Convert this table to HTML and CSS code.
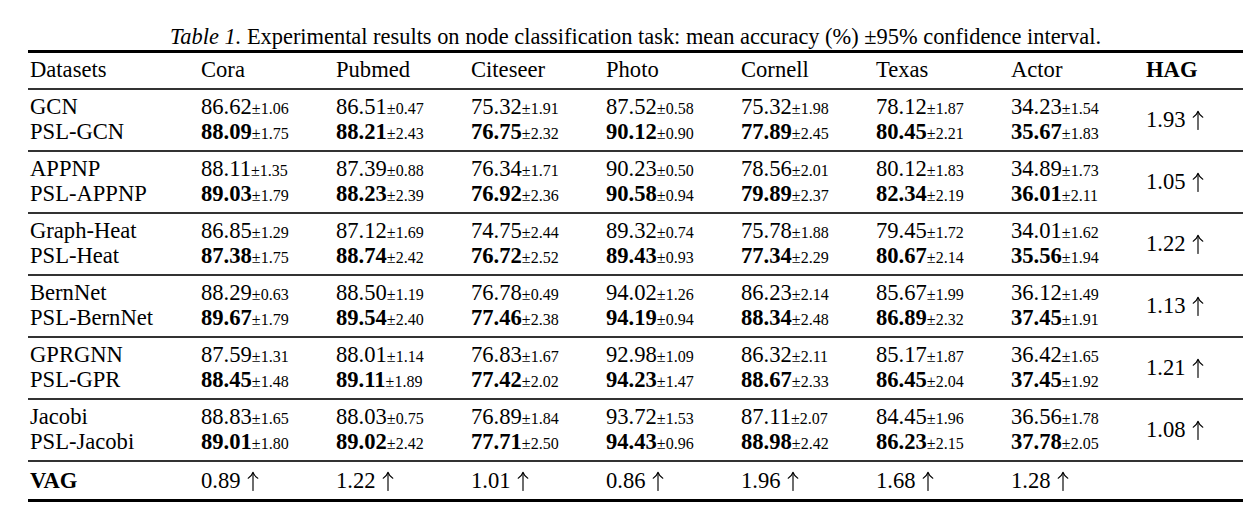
FILE: index.html
```html
<!DOCTYPE html>
<html lang="en">
<head>
<meta charset="utf-8">
<title>Table 1</title>
<link rel="stylesheet" href="styles.css">
</head>
<body>
<svg class="defs" width="0" height="0" aria-hidden="true">
  <defs>
    <symbol id="up" viewBox="0 0 12 20">
      <path d="M6 19.5 V2" fill="none" stroke="#000" stroke-width="1.15" stroke-linecap="round"/>
      <path d="M1.2 7.2 Q4.6 5.2 6 1.2 Q7.4 5.2 10.8 7.2" fill="none" stroke="#000" stroke-width="1.1" stroke-linecap="round" stroke-linejoin="round"/>
    </symbol>
  </defs>
</svg>
<div class="page">
  <p class="caption"><i>Table 1.</i> Experimental results on node classification task: mean accuracy (%) ±95% confidence interval.</p>
  <table class="results">
    <colgroup>
      <col class="c-name"><col class="c-val"><col class="c-val"><col class="c-val"><col class="c-val"><col class="c-val"><col class="c-val"><col class="c-val"><col class="c-gain">
    </colgroup>
    <thead>
      <tr><th>Datasets</th><th>Cora</th><th>Pubmed</th><th>Citeseer</th><th>Photo</th><th>Cornell</th><th>Texas</th><th>Actor</th><th class="bold">HAG</th></tr>
    </thead>
    <tbody>
      <tr class="first"><td>GCN</td><td>86.62<small>±1.06</small></td><td>86.51<small>±0.47</small></td><td>75.32<small>±1.91</small></td><td>87.52<small>±0.58</small></td><td>75.32<small>±1.98</small></td><td>78.12<small>±1.87</small></td><td>34.23<small>±1.54</small></td><td class="gain" rowspan="2">1.93<svg class="arrow"><use href="#up"/></svg></td></tr>
      <tr class="second"><td>PSL-GCN</td><td><b>88.09</b><small>±1.75</small></td><td><b>88.21</b><small>±2.43</small></td><td><b>76.75</b><small>±2.32</small></td><td><b>90.12</b><small>±0.90</small></td><td><b>77.89</b><small>±2.45</small></td><td><b>80.45</b><small>±2.21</small></td><td><b>35.67</b><small>±1.83</small></td></tr>

      <tr class="first"><td>APPNP</td><td>88.11<small>±1.35</small></td><td>87.39<small>±0.88</small></td><td>76.34<small>±1.71</small></td><td>90.23<small>±0.50</small></td><td>78.56<small>±2.01</small></td><td>80.12<small>±1.83</small></td><td>34.89<small>±1.73</small></td><td class="gain" rowspan="2">1.05<svg class="arrow"><use href="#up"/></svg></td></tr>
      <tr class="second"><td>PSL-APPNP</td><td><b>89.03</b><small>±1.79</small></td><td><b>88.23</b><small>±2.39</small></td><td><b>76.92</b><small>±2.36</small></td><td><b>90.58</b><small>±0.94</small></td><td><b>79.89</b><small>±2.37</small></td><td><b>82.34</b><small>±2.19</small></td><td><b>36.01</b><small>±2.11</small></td></tr>

      <tr class="first"><td>Graph-Heat</td><td>86.85<small>±1.29</small></td><td>87.12<small>±1.69</small></td><td>74.75<small>±2.44</small></td><td>89.32<small>±0.74</small></td><td>75.78<small>±1.88</small></td><td>79.45<small>±1.72</small></td><td>34.01<small>±1.62</small></td><td class="gain" rowspan="2">1.22<svg class="arrow"><use href="#up"/></svg></td></tr>
      <tr class="second"><td>PSL-Heat</td><td><b>87.38</b><small>±1.75</small></td><td><b>88.74</b><small>±2.42</small></td><td><b>76.72</b><small>±2.52</small></td><td><b>89.43</b><small>±0.93</small></td><td><b>77.34</b><small>±2.29</small></td><td><b>80.67</b><small>±2.14</small></td><td><b>35.56</b><small>±1.94</small></td></tr>

      <tr class="first"><td>BernNet</td><td>88.29<small>±0.63</small></td><td>88.50<small>±1.19</small></td><td>76.78<small>±0.49</small></td><td>94.02<small>±1.26</small></td><td>86.23<small>±2.14</small></td><td>85.67<small>±1.99</small></td><td>36.12<small>±1.49</small></td><td class="gain" rowspan="2">1.13<svg class="arrow"><use href="#up"/></svg></td></tr>
      <tr class="second"><td>PSL-BernNet</td><td><b>89.67</b><small>±1.79</small></td><td><b>89.54</b><small>±2.40</small></td><td><b>77.46</b><small>±2.38</small></td><td><b>94.19</b><small>±0.94</small></td><td><b>88.34</b><small>±2.48</small></td><td><b>86.89</b><small>±2.32</small></td><td><b>37.45</b><small>±1.91</small></td></tr>

      <tr class="first"><td>GPRGNN</td><td>87.59<small>±1.31</small></td><td>88.01<small>±1.14</small></td><td>76.83<small>±1.67</small></td><td>92.98<small>±1.09</small></td><td>86.32<small>±2.11</small></td><td>85.17<small>±1.87</small></td><td>36.42<small>±1.65</small></td><td class="gain" rowspan="2">1.21<svg class="arrow"><use href="#up"/></svg></td></tr>
      <tr class="second"><td>PSL-GPR</td><td><b>88.45</b><small>±1.48</small></td><td><b>89.11</b><small>±1.89</small></td><td><b>77.42</b><small>±2.02</small></td><td><b>94.23</b><small>±1.47</small></td><td><b>88.67</b><small>±2.33</small></td><td><b>86.45</b><small>±2.04</small></td><td><b>37.45</b><small>±1.92</small></td></tr>

      <tr class="first"><td>Jacobi</td><td>88.83<small>±1.65</small></td><td>88.03<small>±0.75</small></td><td>76.89<small>±1.84</small></td><td>93.72<small>±1.53</small></td><td>87.11<small>±2.07</small></td><td>84.45<small>±1.96</small></td><td>36.56<small>±1.78</small></td><td class="gain" rowspan="2">1.08<svg class="arrow"><use href="#up"/></svg></td></tr>
      <tr class="second"><td>PSL-Jacobi</td><td><b>89.01</b><small>±1.80</small></td><td><b>89.02</b><small>±2.42</small></td><td><b>77.71</b><small>±2.50</small></td><td><b>94.43</b><small>±0.96</small></td><td><b>88.98</b><small>±2.42</small></td><td><b>86.23</b><small>±2.15</small></td><td><b>37.78</b><small>±2.05</small></td></tr>

      <tr class="summary"><td><b>VAG</b></td><td>0.89<svg class="arrow"><use href="#up"/></svg></td><td>1.22<svg class="arrow"><use href="#up"/></svg></td><td>1.01<svg class="arrow"><use href="#up"/></svg></td><td>0.86<svg class="arrow"><use href="#up"/></svg></td><td>1.96<svg class="arrow"><use href="#up"/></svg></td><td>1.68<svg class="arrow"><use href="#up"/></svg></td><td>1.28<svg class="arrow"><use href="#up"/></svg></td><td></td></tr>
    </tbody>
  </table>
</div>
</body>
</html>
```

FILE: styles.css
```css
html, body {
  margin: 0;
  padding: 0;
  background: #ffffff;
}

body {
  font-family: "Liberation Serif", "Times New Roman", serif;
  color: #000000;
}

.defs {
  position: absolute;
  width: 0;
  height: 0;
  overflow: hidden;
}

.page {
  padding: 25px 0 0 28px;
}

.caption {
  width: 1215px;
  margin: 0 0 1px 0;
  font-size: 22.4px;
  line-height: 24px;
  text-align: center;
}

.results {
  width: 1215px;
  table-layout: fixed;
  border-collapse: separate;
  border-spacing: 0;
  font-size: 22.6px;
  line-height: 25px;
}

.c-name { width: 172px; }
.c-val { width: 135px; }
.c-gain { width: 98px; }

.results th,
.results td {
  height: 25px;
  padding: 0 0 0 1px;
  text-align: left;
  vertical-align: middle;
  white-space: nowrap;
}

.results th:first-child,
.results td:first-child {
  padding-left: 2px;
}

.results th {
  font-weight: normal;
  border-top: 3px solid #000000;
  border-bottom: 2px solid #333333;
  padding-top: 4px;
  padding-bottom: 6px;
}

.results th.bold {
  font-weight: bold;
}

.results tr.first td {
  padding-top: 4px;
}

.results tr.first + tr.second + tr.first td {
  border-top: 2px solid #333333;
}

.results tr.second td {
  padding-bottom: 6px;
}

.results td.gain {
  padding-bottom: 6px;
}

.results tr.summary td {
  height: 25px;
  border-top: 2px solid #333333;
  border-bottom: 3px solid #000000;
  padding-top: 6px;
  padding-bottom: 6px;
}

.results small {
  font-size: 16px;
  line-height: 0;
}

.results b {
  font-weight: bold;
  line-height: 0;
}

.arrow {
  width: 12px;
  height: 20px;
  margin-left: 6px;
  vertical-align: -3px;
}
```
